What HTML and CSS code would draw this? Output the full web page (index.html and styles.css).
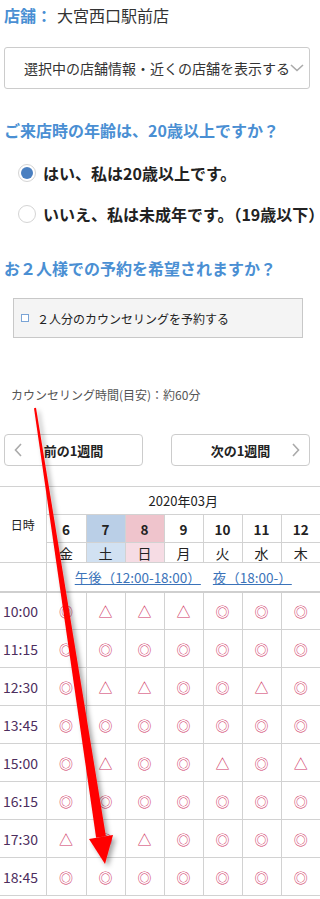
FILE: index.html
```html
<!DOCTYPE html>
<html>
	<head>
		<meta charset="UTF-8">
		<title>予約</title>
		<link rel="stylesheet" href="styles.css">
	</head>
	<body>
		<div class="shop"><span class="shop-label">店舗：</span><span class="shop-name">大宮西口駅前店</span></div>
		<div class="select">
			<span>選択中の店舗情報・近くの店舗を表示する</span>
			<svg width="14" height="8" viewBox="0 0 14 8"><path d="M1 1 L7 6.5 L13 1" fill="none" stroke="#aaa" stroke-width="1.6"/></svg>
		</div>

		<div class="q">ご来店時の年齢は、20歳以上ですか？</div>
		<div class="radios">
			<div class="radio"><span class="dot on"></span>はい、私は20歳以上です。</div>
			<div class="radio"><span class="dot"></span>いいえ、私は未成年です。（19歳以下）</div>
		</div>

		<div class="q q2">お２人様での予約を希望されますか？</div>
		<div class="pair"><span class="box"></span>２人分のカウンセリングを予約する</div>

		<div class="note">カウンセリング時間(目安)：約60分</div>

		<div class="weeks">
			<div class="wbtn prev">
				<svg width="8" height="14" viewBox="0 0 8 14"><path d="M7 1 L1.5 7 L7 13" fill="none" stroke="#aaa" stroke-width="1.6"/></svg>
				<span>前の1週間</span>
				<i></i>
			</div>
			<div class="wbtn next">
				<i></i>
				<span>次の1週間</span>
				<svg width="8" height="14" viewBox="0 0 8 14"><path d="M1 1 L6.5 7 L1 13" fill="none" stroke="#aaa" stroke-width="1.6"/></svg>
			</div>
		</div>

		<table class="cal">
			<colgroup>
				<col class="c-time"><col class="c-first"><col><col><col><col><col><col>
			</colgroup>
			<tr class="r-month">
				<td class="head-time" rowspan="3">日時</td>
				<td class="month" colspan="7">2020年03月</td>
			</tr>
			<tr class="r-day">
				<td>6</td><td class="sat">7</td><td class="sun">8</td><td>9</td><td>10</td><td>11</td><td>12</td>
			</tr>
			<tr class="r-wd">
				<td>金</td><td class="sat">土</td><td class="sun">日</td><td>月</td><td>火</td><td>水</td><td>木</td>
			</tr>
			<tr class="r-link">
				<td></td>
				<td colspan="7"><a href="#">午後（12:00-18:00）</a><a href="#">夜（18:00-）</a></td>
			</tr>
			<tr class="slot"><td class="t">10:00</td><td>◎</td><td>△</td><td>△</td><td>△</td><td>◎</td><td>◎</td><td>◎</td></tr>
			<tr class="slot"><td class="t">11:15</td><td>◎</td><td>◎</td><td>◎</td><td>◎</td><td>◎</td><td>◎</td><td>◎</td></tr>
			<tr class="slot"><td class="t">12:30</td><td>◎</td><td>△</td><td>△</td><td>◎</td><td>◎</td><td>△</td><td>◎</td></tr>
			<tr class="slot"><td class="t">13:45</td><td>◎</td><td>◎</td><td>◎</td><td>◎</td><td>◎</td><td>◎</td><td>◎</td></tr>
			<tr class="slot"><td class="t">15:00</td><td>◎</td><td>△</td><td>◎</td><td>◎</td><td>△</td><td>◎</td><td>△</td></tr>
			<tr class="slot"><td class="t">16:15</td><td>◎</td><td>◎</td><td>◎</td><td>◎</td><td>◎</td><td>◎</td><td>◎</td></tr>
			<tr class="slot"><td class="t">17:30</td><td>△</td><td>◎</td><td>△</td><td>◎</td><td>◎</td><td>◎</td><td>◎</td></tr>
			<tr class="slot"><td class="t">18:45</td><td>◎</td><td>◎</td><td>◎</td><td>◎</td><td>◎</td><td>◎</td><td>◎</td></tr>
		</table>

		<!-- 注釈の矢印 -->
		<svg class="arrow" width="320" height="899" viewBox="0 0 320 899">
			<defs>
				<filter id="sh" x="-50%" y="-5%" width="200%" height="110%">
					<feDropShadow dx="3" dy="3" stdDeviation="2.5" flood-color="#000" flood-opacity="0.35"/>
				</filter>
			</defs>
			<g filter="url(#sh)" fill="#ff0000">
				<polygon points="36,407.8 34,408.2 96.1,837.8 105.9,836.2"/>
				<polygon points="89,839 113,835 105,864"/>
			</g>
		</svg>
	</body>
</html>
```

FILE: styles.css
```css
*{
	margin:0;padding: 0;
	box-sizing:border-box;
}
body{
	width:320px;
	position:relative;
	overflow-x:hidden;
	font-family:"Noto Sans CJK JP","Noto Sans",sans-serif;
	color:#333;
	background:#fff;
}
.shop{
	height:30px;
	line-height:30px;
	padding-left:4px;
	font-size:16px;
}
.shop-label{
	color:#4a8fd3;
	font-weight:bold;
}
.shop-name{
	margin-left:5px;
	color:#333;
}
.select{
	margin:17px 10px 0 4px;
	height:42px;
	border:1px solid #ccc;
	border-radius:3px;
	display:flex;
	align-items:center;
	padding-left:19px;
	font-size:14px;
	color:#333;
	white-space:nowrap;
}
.q{
	margin-top:29px;
	padding-left:4px;
	height:24px;
	line-height:24px;
	font-size:16px;
	font-weight:bold;
	color:#4a8fd3;
	white-space:nowrap;
}
.q2{
	margin-top:22px;
}
.radios{
	padding-top:10px;
}
.radio{
	height:41px;
	display:flex;
	align-items:center;
	padding-left:18px;
	font-size:16px;
	font-weight:bold;
	color:#222;
	white-space:nowrap;
}
.dot{
	flex:none;
	width:18px;
	height:18px;
	margin-right:7px;
	border:1px solid #d4d4d4;
	border-radius:50%;
	display:flex;
	align-items:center;
	justify-content:center;
	background:#fff;
}
.dot.on::after{
	content:"";
	width:12px;
	height:12px;
	border-radius:50%;
	background:#4a7fc0;
}
.pair{
	margin:18px 0 0 13px;
	width:290px;
	height:40px;
	background:#f4f4f4;
	border:1px solid #c8c8c8;
	display:flex;
	align-items:center;
	padding-left:7px;
	font-size:12px;
	color:#222;
}
.box{
	width:8px;
	height:8px;
	border:1px solid #7aa4d6;
	background:#fff;
	margin-right:8px;
}
.note{
	margin-top:47px;
	padding-left:11px;
	height:20px;
	line-height:20px;
	font-size:12px;
	color:#555;
}
.weeks{
	margin:29px 10px 0 4px;
	display:flex;
	justify-content:space-between;
}
.wbtn{
	width:139px;
	height:32px;
	border:1px solid #ccc;
	border-radius:4px;
	display:grid;
	grid-template-columns:26px 1fr 26px;
	align-items:center;
	justify-items:center;
	font-size:13px;
	font-weight:bold;
	color:#222;
}
.cal{
	margin-top:20px;
	width:320px;
	border-collapse:collapse;
	table-layout:fixed;
	font-size:13px;
	color:#222;
}
.c-time{
	width:46px;
}
.c-first{
	width:40px;
}
.cal td{
	border:1px solid #d2d2d2;
	text-align:center;
	padding:0;
}
.cal tr td:first-child{
	border-left:none;
}
.cal tr td:last-child{
	border-right:none;
}
.head-time{
	font-size:12px;
}
.r-month td{
	height:28px;
}
.month{
	font-size:13px;
	color:#222;
}
.r-day td{
	height:28px;
	font-size:13.5px;
	font-weight:bold;
}
.r-wd td{
	height:20px;
	font-size:14px;
	line-height:18px;
}
.r-day .sat{background:#bacfe7;}
.r-day .sun{background:#efc4cc;}
.r-wd .sat{background:#d1e1f2;}
.r-wd .sun{background:#f6dce4;}
.r-link td{
	height:29px;
	border-bottom:2px solid #cfcfcf;
}
.r-link a{
	font-size:13.5px;
	color:#3b73b9;
	margin:0 6px;
}
.slot td{
	height:38px;
	font-size:14px;
	color:#cf3565;
}
.slot .t{
	text-align:left;
	padding-left:3px;
	font-size:14px;
	color:#4d2e5e;
}
.arrow{
	position:absolute;
	left:0;
	top:0;
	pointer-events:none;
}
```
